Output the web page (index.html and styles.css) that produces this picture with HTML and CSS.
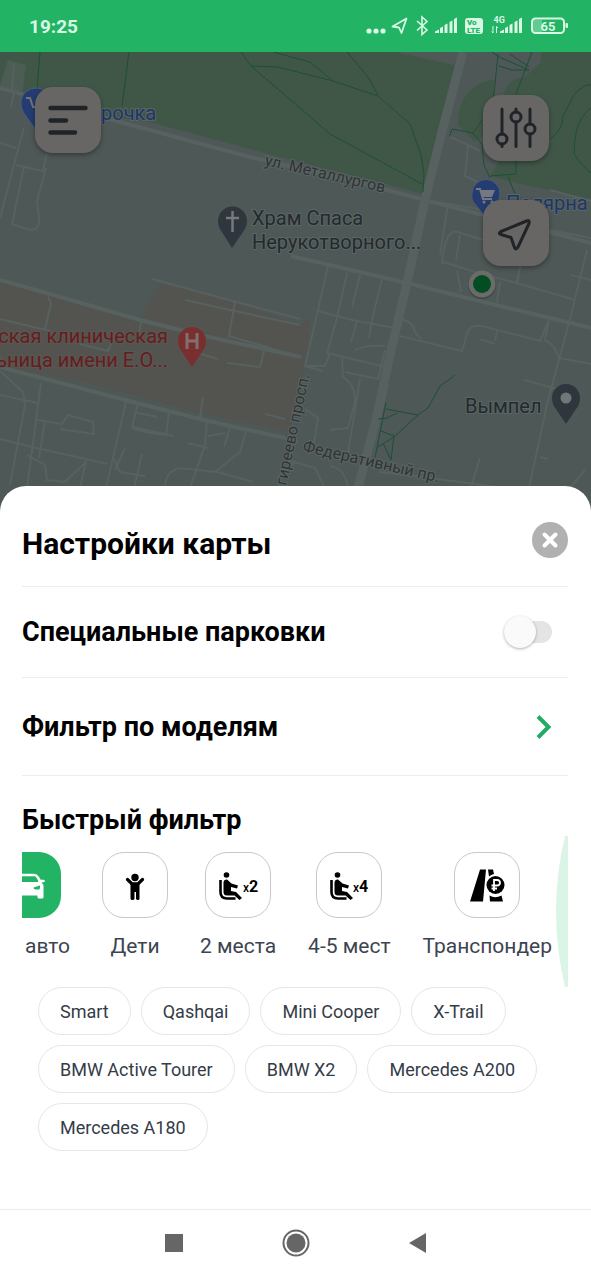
FILE: index.html
```
<!DOCTYPE html>
<html lang="ru">
<head>
    <meta charset="UTF-8">
    <meta name="viewport" content="width=device-width, initial-scale=1.0">
    <title>Настройки карты</title>
    <link rel="stylesheet" href="styles.css">
</head>
<body>
    <header class="status-bar">
        <time class="status-time">19:25</time>
        <svg class="status-icons" viewBox="366 12 203 26" fill="currentColor" aria-hidden="true">
            <circle cx="369" cy="30" r="2.6"/>
            <circle cx="376" cy="30" r="2.6"/>
            <circle cx="383" cy="30" r="2.6"/>
            <path d="M406.500 17.500L392.500 25.500L399 26.500L401.500 32Z" fill="none" stroke="currentColor" stroke-width="1.8" stroke-linejoin="round"/>
            <path d="M417 20L427 29L422 33.500V16L427 20.500L417 29.500" fill="none" stroke="currentColor" stroke-width="1.6"/>
            <path d="M435 32v-1.500l4-2v3.500zM440 32v-5l3-1.500v6.500zM444.500 32v-8l3-1.500v9.500zM449.500 32v-11l3-1.500v12.500zM454 32v-14l3-1.500v15.500z"/>
            <rect x="465" y="17" width="18" height="16" rx="3"/>
            <text class="volte" x="467" y="24">Vo</text>
            <text class="volte" x="467" y="32">LTE</text>
            <text class="net" x="493.500" y="22">4G</text>
            <path d="M493 25v7M491.500 30.500l1.500 1.500M496.500 32v-6.500l1.500 1.500" fill="none" stroke="currentColor"/>
            <path d="M500 32v-1.500l4-2v3.500zM505 32v-5l3-1.500v6.500zM509.500 32v-8l3-1.500v9.500zM514.500 32v-11l3-1.500v12.500zM519 32v-14l3-1.500v15.500z"/>
            <rect x="533" y="19" width="9" height="12" opacity=".35"/>
            <rect x="532" y="17.500" width="32" height="14.500" rx="3.500" fill="none" stroke="currentColor" stroke-width="2"/>
            <rect x="565.500" y="22" width="2.500" height="5" rx="1"/>
            <text class="battery" x="540.500" y="29.500">65</text>
        </svg>
    </header>

    <main class="map">
        <svg class="map-canvas" viewBox="0 52 591 464" preserveAspectRatio="xMidYMin slice" role="img" aria-label="Карта">
            <rect y="52" width="591" height="464" fill="#4e5857"/>

            <!-- Парки -->
            <g fill="#405748">
                <path d="M0 52H395L458 66L424 194L345 174L265 153L150 122L100 115L22 99L26 65L8 60L0 84Z"/>
                <path d="M458 125C457 102 470 82 494 80V100L487 134L475 142Z"/>
                <path d="M504 92Q510 77 525 77L541 62V52H591V199L520 184L490 176L500 160Z"/>
            </g>
            <path d="M8 60L26 65L21 94L0 89Z" fill="#4c5d54"/>

            <!-- Территория больницы -->
            <path d="M0 280L50 294L140 320L160 284L190 288L300 324L310 320L308 350L301 388L290 432L200 413L80 381L0 367Z" fill="#53544f"/>

            <!-- Улицы -->
            <g class="roads">
                <path class="main" d="M463 52L444 124L425 200L407 283L390 355L376 420L358 488"/>
                <path class="mid" d="M0 88L105 118L250 157L345 179L425 200L591 243M0 280L50 294L140 320L200 335L301 357M0 367L125 400L208 421L285 438M291 256L407 283L500 306L571 323L591 328"/>
                <path d="M15 89L11 107M14 65L12 90M24 127L0 218M0 143L16 148M16 165L43 171L47 153M24 167L12 224L30 230Q41 230 39 217L37 201L46 168"/>
                <path d="M448 136L468 145L480 151M468 146L465 176L490 188M550 190L591 201M448 204L440 255M424 200L485 210L483 214M442 264Q445 228 458 232L483 240M456 260L460 235M550 230L591 238M443 262L482 274L513 282L575 300M457 271L461 292M500 282L497 302M517 283L522 258"/>
                <path d="M587 250L569 323L548 400L529 488M571 275L591 280M549 320L545 340Q555 345 559 358L591 364M400 336L462 351L468 331Q471 325 482 326L540 341L549 320M497 331L495 341M524 380L557 389M540 457L548 459"/>
                <path d="M328 266L318 310L305 366L323 371M347 273L337 318L327 353L390 368M360 275L352 307M382 279L372 320L369 338M318 311L352 320L395 328M357 321L351 342M355 350Q365 345 385 346M330 354L325 366L305 366M342 356L343 377Q356 386 355 402L348 428L330 430M345 372L378 379L385 350M360 379L348 453M305 409L318 418L314 444M400 319Q413 321 415 332L421 339M388 384L380 419M480 339L495 344"/>
                <path d="M152 279L240 303L300 319M185 300L230 310L300 325M235 302L229 336L300 357M265 347L260 367L227 363M201 354L218 359M141 322L139 334M48 296L51 304L45 329M80 344L108 351L114 336M0 319L50 331M203 397L200 418L298 442M265 414L285 419"/>
                <path d="M0 371L23 392L25 405L10 485M41 383L27 488M0 395L38 403M0 439L32 447L108 464M37 420L62 424L68 415L93 422L94 434L60 429M45 420L39 458M126 402L106 488M138 403L132 427Q134 431 166 435L169 413M134 412L157 417M173 436L133 427M207 421L205 445L190 488M188 443L208 448M208 436L225 433M230 428L224 447M246 432L240 452L215 472L180 468Q165 471 165 488M214 471L253 482M114 459L120 472L145 476M125 448L115 470M142 454L134 488M86 460L80 488M27 455L45 465L47 480L65 482L86 462"/>
                <path d="M291 461L315 468L325 488M297 462Q275 470 280 488M330 466Q345 468 348 488M379 472L430 478L505 488M470 490L480 458M570 488L585 470"/>
            </g>

            <!-- Тропинки -->
            <g class="paths">
                <path d="M40 52L37 90M129 52L122 106M241 52L251 66L300 108L330 134L424 185M251 66L278 67L333 81L378 96L410 124L421 155L424 173L423 192M274 52L291 57L310 62L333 81M347 52L368 77L378 95"/>
                <path d="M449 137L452 129L473 133L484 118L494 94L498 54M473 133L482 144L484 165L490 178M532 52L516 94M492 52L499 57L529 70M510 54L529 67M499 66L512 70L529 70M490 176L516 174V161M508 177L516 196M551 139Q565 125 562 118L574 95Q584 83 591 85M591 108C573 122 575 145 574 153Q580 165 591 173"/>
                <path d="M455 375L450 379L440 386L428 408L418 415L394 437L378 447M386 402L375 458M386 409L418 415M378 419L387 418L397 413M381 431L394 436L391 460L383 443"/>
            </g>

            <!-- Метки -->
            <g>
                <path class="pin-blue" d="M36 130L25 115Q20 108 21 102A15 15 0 0 1 51 104Q50 112 36 130Z"/>
                <path d="M26 98h4l3 9h8" fill="none" stroke="#737276" stroke-width="2"/>
                <text class="label blue" x="101" y="120">рочка</text>

                <path class="pin-blue" d="M486 218L475 204Q471 200 472 193A14 14 0 0 1 500 194Q500 202 486 218Z"/>
                <path d="M476 189h4l3 10h9" fill="none" stroke="#777980" stroke-width="2"/>
                <path d="M481 190h14l-3 7h-9z" fill="#777980"/>
                <circle cx="484" cy="202" r="1.500" fill="#777980"/>
                <circle cx="492" cy="202" r="1.500" fill="#777980"/>
                <text class="label blue" x="506" y="210">Полярна</text>

                <path d="M232 248L222 232Q218 227 218 221A14.500 14.500 0 0 1 247 221Q247 227 243 232Z" fill="#30363d"/>
                <path d="M232.500 211v21M226 218h13" stroke="#777a7b" stroke-width="2.500"/>
                <text class="label" x="252" y="225">Храм Спаса</text>
                <text class="label" x="252" y="249">Нерукотворного...</text>

                <text class="label red" x="168" y="343" text-anchor="end">ская клиническая</text>
                <text class="label red" x="168" y="367" text-anchor="end">ьница имени Е.О...</text>
                <path d="M192 367L182 352Q178 347 178 341A14 14 0 0 1 206 341Q206 347 202 352Z" fill="#792f2e"/>
                <path d="M187 333v16M197 333v16M187 341h10" stroke="#80716d" stroke-width="3"/>

                <text class="label" x="465" y="413">Вымпел</text>
                <path d="M566 424L556 409Q552 405 552 398A14 14 0 0 1 580 398Q580 405 576 409Z" fill="#30363d"/>
                <circle cx="566" cy="398" r="5.500" fill="#717777"/>

                <text class="street" transform="translate(264 165) rotate(13)">ул. Металлургов</text>
                <text class="street" transform="translate(302 451) rotate(13)">Федеративный пр.</text>
                <text class="street" transform="translate(286 486) rotate(-78)">гиреево просп.</text>

                <circle cx="482" cy="285" r="14" fill="#3f4645"/>
                <circle cx="482" cy="284" r="13.500" fill="#6b6b69"/>
                <circle cx="482" cy="284" r="9" fill="#034d22"/>
            </g>
        </svg>

        <div class="map-controls">
            <button class="map-btn" type="button" aria-label="Меню">
                <svg width="66" height="66" viewBox="0 0 66 66" fill="none" stroke="currentColor" stroke-width="4.500" stroke-linecap="round">
                    <path d="M15.500 21H50.500M15.500 33.500H31M15.500 45.500H40"/>
                </svg>
            </button>
            <div class="map-controls-side">
                <button class="map-btn" type="button" aria-label="Фильтр">
                    <svg width="66" height="66" viewBox="0 0 66 66" fill="none" stroke="currentColor" stroke-width="3" stroke-linecap="round">
                        <path d="M19 14V39M19 49V51.500M33 14V17M33 27V51.500M47 14V29M47 39V51.500"/>
                        <circle cx="19" cy="44" r="5"/>
                        <circle cx="33" cy="22" r="5"/>
                        <circle cx="47" cy="34" r="5"/>
                    </svg>
                </button>
                <button class="map-btn" type="button" aria-label="Моё местоположение">
                    <svg width="66" height="66" viewBox="0 0 66 66" fill="none" stroke="currentColor" stroke-width="3" stroke-linejoin="round">
                        <path d="M43.500 21L18 31.500Q14.500 33.500 18 34.500L28 37.500L31.500 47.500Q33 50.500 35 47L46 23.500Q47 19.500 43.500 21Z"/>
                    </svg>
                </button>
            </div>
        </div>
    </main>

    <section class="sheet">
        <div class="sheet-header">
            <h1>Настройки карты</h1>
            <button class="close-btn" type="button" aria-label="Закрыть">
                <svg width="36" height="36" viewBox="0 0 36 36" fill="none" stroke="currentColor" stroke-width="4" stroke-linecap="round">
                    <path d="M12.500 12.500L23.500 23.500M23.500 12.500L12.500 23.500"/>
                </svg>
            </button>
        </div>

        <label class="row row-parking">
            <span>Специальные парковки</span>
            <input class="switch" type="checkbox">
        </label>

        <a class="row row-models" href="#models">
            <span>Фильтр по моделям</span>
            <svg width="16" height="26" viewBox="0 0 16 26" fill="none" stroke="#22ab66" stroke-width="4">
                <path d="M2 2.500L12.500 13L2 23.500"/>
            </svg>
        </a>

        <h2>Быстрый фильтр</h2>

        <div class="quick">
            <button class="quick-item quick-item-first" type="button">
                <span class="tile active">
                    <svg width="66" height="66" viewBox="0 0 66 66" fill="currentColor">
                        <path d="M19 31L22.500 25Q23.500 23 26 23H39Q41.500 23 42.500 25L46 31" fill="none" stroke="currentColor" stroke-width="2.600"/>
                        <path d="M16.500 29h4M44.500 29h4" stroke="currentColor" stroke-width="2.600" stroke-linecap="round"/>
                        <path d="M19 30H46L48.500 33V45Q48.500 46.500 47 46.500H44Q42.500 46.500 42.500 45V43.500H22.500V45Q22.500 46.500 21 46.500H18Q16.500 46.500 16.500 45V33Z"/>
                        <path d="M38.500 35.500L45 33.500V36Q45 37.500 43 37.500H40.500Q38.500 37.500 38.500 35.500ZM26.500 35.500L20 33.500V36Q20 37.500 22 37.500H24.500Q26.500 37.500 26.500 35.500Z" fill="#22b464"/>
                    </svg>
                </span>
                <span class="quick-label">авто</span>
            </button>
            <button class="quick-item" type="button">
                <span class="tile">
                    <svg width="64" height="64" viewBox="0 0 64 64" fill="currentColor">
                        <circle cx="32" cy="24.500" r="3.700"/>
                        <path d="M24.500 26.500L29 31H35L39.500 26.500" fill="none" stroke="currentColor" stroke-width="3.200" stroke-linecap="round"/>
                        <path d="M27.500 29.500H36.500V45.500Q36.500 47 35 47T33 46V39H31.500V46Q31.500 47 29.500 47T27.500 45.500Z"/>
                    </svg>
                </span>
                <span class="quick-label">Дети</span>
            </button>
            <button class="quick-item" type="button">
                <span class="tile">
                    <svg width="64" height="64" viewBox="0 0 64 64" fill="currentColor">
                        <circle cx="20.500" cy="22" r="2.800"/>
                        <path d="M14.500 27V39Q14.500 45.500 21 45.500H29.500" fill="none" stroke="currentColor" stroke-width="2.600"/>
                        <path d="M17.500 29Q18 26 21 26.500L25.500 30.500L32 32.500L31 35.500L25 34V38L30 39L36 45L33.500 47L28.500 42.500H21Q17.500 42.500 17.500 39Z"/>
                        <text class="seat-x" x="37" y="39">x</text>
                        <text class="seat-n" x="43" y="39">2</text>
                    </svg>
                </span>
                <span class="quick-label">2 места</span>
            </button>
            <button class="quick-item" type="button">
                <span class="tile">
                    <svg width="64" height="64" viewBox="0 0 64 64" fill="currentColor">
                        <circle cx="20.500" cy="22" r="2.800"/>
                        <path d="M14.500 27V39Q14.500 45.500 21 45.500H29.500" fill="none" stroke="currentColor" stroke-width="2.600"/>
                        <path d="M17.500 29Q18 26 21 26.500L25.500 30.500L32 32.500L31 35.500L25 34V38L30 39L36 45L33.500 47L28.500 42.500H21Q17.500 42.500 17.500 39Z"/>
                        <text class="seat-x" x="36" y="39">x</text>
                        <text class="seat-n" x="42" y="39">4</text>
                    </svg>
                </span>
                <span class="quick-label">4-5 мест</span>
            </button>
            <button class="quick-item" type="button">
                <span class="tile">
                    <svg width="64" height="64" viewBox="0 0 64 64" fill="currentColor">
                        <path d="M25 16.500H31L28 48.500H15Z"/>
                        <path d="M33 16.500H38L39 21Q36 21.500 34 23.500ZM34.500 42.500Q40 46 46.500 42.500L48 48.500H35Z"/>
                        <circle cx="40.500" cy="32" r="9"/>
                        <path d="M39 38V27H42Q45 27 45 29.700T42 32.500H36.500M36.500 35.500H42" fill="none" stroke="#fff" stroke-width="1.800"/>
                    </svg>
                </span>
                <span class="quick-label">Транспондер</span>
            </button>
            <svg class="overscroll" width="12" height="151" viewBox="0 0 12 151" preserveAspectRatio="none" aria-hidden="true">
                <path d="M9 0Q0 38 0 75Q0 113 9 151H12V0Z" fill="#daf4e6"/>
            </svg>
        </div>

        <div class="models">
            <button class="pill" type="button">Smart</button>
            <button class="pill" type="button">Qashqai</button>
            <button class="pill" type="button">Mini Cooper</button>
            <button class="pill" type="button">X-Trail</button>
            <button class="pill" type="button">BMW Active Tourer</button>
            <button class="pill" type="button">BMW X2</button>
            <button class="pill" type="button">Mercedes A200</button>
            <button class="pill" type="button">Mercedes A180</button>
        </div>
    </section>

    <nav class="system-nav">
        <button type="button" aria-label="Недавние">
            <svg width="28" height="28" viewBox="0 0 28 28" fill="currentColor"><path d="M5 5H23V23H5Z"/></svg>
        </button>
        <button type="button" aria-label="Домой">
            <svg width="28" height="28" viewBox="0 0 28 28" fill="currentColor">
                <circle cx="14" cy="14" r="12.500" fill="none" stroke="currentColor" stroke-width="2"/>
                <circle cx="14" cy="14" r="9.500"/>
            </svg>
        </button>
        <button type="button" aria-label="Назад">
            <svg width="28" height="28" viewBox="0 0 28 28" fill="currentColor"><path d="M5 14L22 4V24Z"/></svg>
        </button>
    </nav>
</body>
</html>
```
FILE: styles.css
```
* {
    margin: 0;
    padding: 0;
    box-sizing: border-box;
}

body {
    display: flex;
    flex-direction: column;
    min-height: 100vh;
    font-family: Roboto, "Noto Sans", sans-serif;
    background: #fff;
    color: #000;
}

button {
    font: inherit;
    color: inherit;
    background: none;
    border: none;
    cursor: pointer;
}

svg {
    display: block;
}

/* Status bar */
.status-bar {
    display: flex;
    align-items: center;
    justify-content: space-between;
    height: 52px;
    padding: 0 22px 0 29px;
    background: #22b464;
    color: #d8f8e4;
}

.status-time {
    font-size: 19px;
    font-weight: 700;
}

.status-icons {
    width: 203px;
    height: 26px;
}

.volte {
    font-size: 8px;
    font-weight: 900;
    fill: #22b464;
}

.net {
    font-size: 9px;
    font-weight: 700;
}

.battery {
    font-size: 13px;
    font-weight: 700;
}

/* Map */
.map {
    position: relative;
    flex: 1;
    min-height: 300px;
    overflow: hidden;
    background: #4e5857;
}

.map-canvas {
    position: absolute;
    inset: 0;
    width: 100%;
    height: 100%;
}

.roads path {
    fill: none;
    stroke: #566160;
    stroke-width: 2;
}

.roads .mid {
    stroke-width: 4;
}

.roads .main {
    stroke-width: 9;
}

.paths path {
    fill: none;
    stroke: #1c4f36;
    stroke-width: 1;
}

.pin-blue {
    fill: #243c70;
    stroke: #4c5c78;
}

.label {
    font-size: 20px;
    fill: #23292d;
    stroke: #5b6564;
    stroke-width: 2;
    paint-order: stroke;
}

.label.blue {
    fill: #1d3669;
}

.label.red {
    fill: #651d1d;
    stroke: #5b5754;
}

.street {
    font-size: 16px;
    fill: #303335;
    stroke: #5b6564;
    stroke-width: 2;
    paint-order: stroke;
}

.map-controls {
    position: relative;
    display: flex;
    justify-content: space-between;
    align-items: flex-start;
    padding: 35px 42px 0 35px;
}

.map-controls-side {
    display: flex;
    flex-direction: column;
    gap: 39px;
    padding-top: 8px;
}

.map-btn {
    width: 66px;
    height: 66px;
    border-radius: 18px;
    background: #686665;
    color: #202429;
    box-shadow: 0 2px 5px rgba(0, 0, 0, 0.35);
}

/* Bottom sheet */
.sheet {
    position: relative;
    margin-top: -30px;
    padding: 0 23px 58px 22px;
    border-radius: 26px 26px 0 0;
    background: #fff;
}

.sheet-header {
    display: flex;
    justify-content: space-between;
    align-items: flex-start;
    padding: 36px 0 20px;
    border-bottom: 1px solid #ececec;
}

h1 {
    font-size: 30px;
    line-height: 44px;
}

.close-btn {
    width: 36px;
    height: 36px;
    border-radius: 50%;
    background: #b1b1b1;
    color: #fff;
}

.row {
    display: flex;
    justify-content: space-between;
    align-items: center;
    padding-right: 16px;
    border-bottom: 1px solid #ececec;
    color: #000;
    font-size: 27px;
    font-weight: 700;
    text-decoration: none;
    cursor: pointer;
}

.row-parking {
    height: 91px;
}

.row-models {
    height: 98px;
}

.switch {
    position: relative;
    width: 48px;
    height: 22px;
    border-radius: 11px;
    background: #e4e4e4;
    appearance: none;
}

.switch::before {
    content: "";
    position: absolute;
    top: -5px;
    left: 0;
    width: 32px;
    height: 32px;
    border-radius: 50%;
    background: #fafafa;
    box-shadow: 0 1px 3px rgba(0, 0, 0, 0.3);
}

.switch:checked::before {
    left: 16px;
    background: #22b464;
}

h2 {
    padding-top: 28px;
    font-size: 27px;
    line-height: 32px;
}

/* Quick filter */
.quick {
    position: relative;
    display: flex;
    gap: 32px;
    padding: 16px 0 27px;
    overflow: hidden;
}

.quick-item {
    display: flex;
    flex: none;
    flex-direction: column;
    align-items: center;
    gap: 14px;
}

.quick-item-first {
    align-items: flex-end;
    width: 48px;
}

.quick-item-first .tile {
    margin-right: 9px;
}

.tile {
    width: 66px;
    height: 66px;
    border: 1px solid #c8c8c8;
    border-radius: 22px;
}

.tile.active {
    border: none;
    background: #22b464;
    color: #fff;
}

.seat-x {
    font-size: 12px;
    font-weight: 500;
}

.seat-n {
    font-size: 16px;
    font-weight: 700;
}

.quick-label {
    color: #3c4450;
    font-size: 21px;
    line-height: 28px;
}

.overscroll {
    position: absolute;
    top: 0;
    right: 0;
    height: 100%;
}

/* Models */
.models {
    display: flex;
    flex-wrap: wrap;
    gap: 10px;
    padding: 0 16px;
}

.pill {
    height: 48px;
    padding: 0 21px;
    border: 1px solid #e6e6e6;
    border-radius: 24px;
    color: #343c48;
    font-size: 18px;
}

/* System navigation */
.system-nav {
    display: flex;
    justify-content: center;
    gap: 74px;
    padding: 9px 0 13px;
    border-top: 1px solid #ececec;
    color: #666;
}

.system-nav button {
    display: grid;
    place-items: center;
    width: 48px;
    height: 48px;
}
```
